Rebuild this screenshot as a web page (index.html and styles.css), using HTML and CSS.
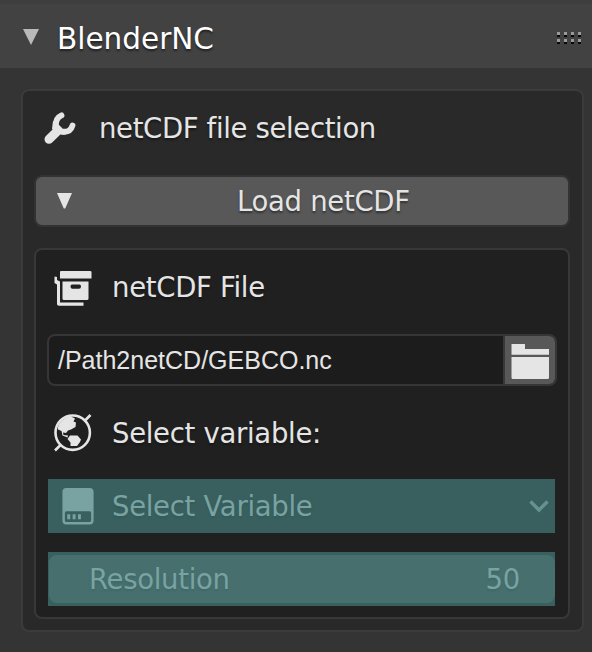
FILE: index.html
```html
<!DOCTYPE html>
<html lang="en">
<head>
<meta charset="utf-8">
<title>BlenderNC</title>
<link rel="stylesheet" href="styles.css">
</head>
<body>
<header class="header">
  <svg class="header-arrow" viewBox="0 0 16 16"><path d="M0 0H16L8 16Z"/></svg>
  <h1 class="title">BlenderNC</h1>
  <div class="grip"><i></i><i></i><i></i><i></i><i></i><i></i><i></i><i></i></div>
</header>
<main class="panel">
  <div class="row heading">
    <svg class="wrench" viewBox="0 0 32 32"><path d="M5 27.300L13 19.500" stroke-width="9"/><path d="M17.500 3.300C12.500 5.500 11.500 9 12 14L17.500 19.500C23 20.500 27 18.500 28.500 13.500" stroke-width="5.800"/><path class="solid" d="M9 9L13.500 12Q15 17.500 21 18L23 22Q18 23.500 16 22L8 17Z"/></svg>
    <span class="label selection">netCDF file selection</span>
  </div>
  <button class="load"><svg class="load-arrow" viewBox="0 0 15 16"><path d="M0 0H15L8.200 15.500H6.800Z"/></svg><span class="label load-label">Load netCDF</span></button>
  <section class="inner">
    <div class="row file-row">
      <svg class="archive" viewBox="0 0 38 36"><path d="M6 1Q6 0 7 0H36Q37.500 0 37.500 1V7.500H6ZM8.500 10.500H34.500V27.500Q34.500 29 33 29H10Q8.500 29 8.500 27.500ZM18 13.500Q16.500 13.500 16.500 15.500T18 17.800H25Q27 17.800 27 15.500T25 13.500Z" fill-rule="evenodd"/><path d="M.5 5.500L3 6V9L6 10.500V31.500H29.500V34.800H5Q3 34.800 3 33V13.500L.5 12Z"/></svg>
      <span class="label file">netCDF File</span>
    </div>
    <div class="path"><span class="path-text">/Path2netCD/GEBCO.nc</span><span class="browse"><svg class="folder" viewBox="0 0 38 35"><path d="M.5 0H14V5H38V10.800H.5ZM.5 13H38V33.500Q38 35 36.500 35H2Q.5 35 .5 33.500Z"/></svg></span></div>
    <div class="row variable-row">
      <svg class="globe" viewBox="0 0 38 38"><circle cx="18.700" cy="18.700" r="17.200"/><path class="axis" d="M1 36.500L7 30.500M30.500 7L36.500 1"/><path class="land" d="M4 13C6 7 11 3 17 2.500L21 4.500L19.500 7.500L22 8.500L21.500 13L17 15.500L14 16.500L12 19L9 18.500L9.500 21L14 21.500L13.500 23.500L8.500 21.500L7.500 17L4 15.500ZM16 21.500L23.500 21.500L27 25.500L26 28L23 32L16.500 32L16.500 28.500L13.500 25Z"/></svg>
      <span class="label variable">Select variable:</span>
    </div>
    <div class="dropdown">
      <svg class="drive" viewBox="0 0 32 38"><path fill-rule="evenodd" d="M4 0H28Q32 0 32 4V33Q32 37.500 28 37.500H4Q0 37.500 0 33V4Q0 0 4 0ZM4 24Q2.500 24 2.500 26V33Q2.500 35 4 35H28Q29.500 35 29.500 33V26Q29.500 24 28 24ZM5 27H8V32H5ZM10.500 27H13.500V32H10.500ZM16 27H19V32H16Z"/></svg>
      <span class="label select">Select Variable</span>
      <svg class="chevron" viewBox="0 0 20 13"><path d="M1.500 1.500L10 10L18.500 1.500"/></svg>
    </div>
    <div class="resolution"><div class="field"><span class="label">Resolution</span><span class="label">50</span></div></div>
  </section>
</main>
</body>
</html>
```
FILE: styles.css
```css
* { box-sizing: border-box; }
body { margin: 0; width: 592px; height: 652px; background: #343434; overflow: hidden; font-family: "DejaVu Sans", sans-serif; color: #e5e5e5; }
svg { display: block; flex: none; fill: #e5e5e5; overflow: visible; }
.header { height: 68px; background: #424242; border-top: 4px solid #3e3e3e; display: flex; align-items: center; padding: 4px 11px 0 23px; }
.header-arrow { width: 16px; height: 16px; fill: #b9b9b9; margin: -2px 18px 0 0; }
.title { margin: 1px 0 0; font-size: 29.5px; font-weight: 400; color: #fff; text-shadow: 0 2px 2px #222; letter-spacing: 0; line-height: 34px; }
.grip { margin-left: auto; display: grid; grid-template-columns: repeat(4, 3px); gap: 2px 4px; }
.grip i { width: 3px; height: 5px; background: #999; border-bottom: 2px solid #080808; }
.panel { width: 563px; height: 543px; margin: 21px 0 0 21px; background: #292929; border: 2px solid #3b3b3b; border-radius: 8px; padding: 0 12px; }
.row { display: flex; align-items: center; }
.label { font-size: 27.5px; line-height: 34px; letter-spacing: -.3px; white-space: pre; text-shadow: 0 2px 2px #181818; }
.heading { height: 74px; padding-left: 9px; }
.wrench { width: 32px; height: 32px; }
.wrench path { fill: none; stroke: #e5e5e5; stroke-linecap: round; }
.wrench .solid { fill: #e5e5e5; stroke: none; }
.selection { margin-left: 23px; letter-spacing: -.35px; }
.load { display: flex; align-items: center; width: 536px; height: 52px; margin: 10px 0 0 -1px; padding: 0 0 0 21px; background: #585858; border: 2px solid #333; border-radius: 8px; font: inherit; color: inherit; }
.load-arrow { width: 15px; height: 16px; }
.load-label { margin-left: 165px; text-shadow: 0 2px 2px #333; }
.inner { width: 536px; height: 371px; margin: 21px 0 0 -1px; padding: 0 11px; border: 2px solid #383838; border-radius: 8px; background: #202020; }
.file-row { height: 76px; padding-left: 7px; }
.archive { width: 38px; height: 36px; margin-top: 2px; }
.file { margin: -2px 0 0 20px; }
.path { width: 510px; height: 52px; margin-top: 8px; border: 2px solid #363636; border-radius: 8px; background: #1c1c1c; display: flex; overflow: hidden; }
.path-text { flex: 1; padding-left: 9px; font: 25px/49px "Liberation Sans", sans-serif; white-space: pre; }
.browse { width: 52px; border-left: 2px solid #383838; background: #585858; padding: 8px 0 0 6px; }
.folder { width: 38px; height: 35px; }
.variable-row { height: 93px; padding-left: 7px; }
.globe { width: 38px; height: 38px; margin-top: 1px; }
.globe circle, .globe .axis { fill: none; stroke: #e5e5e5; stroke-width: 2.6; }
.variable { margin-left: 20px; }
.dropdown, .resolution { width: 507px; height: 54px; margin-left: 1px; background: #39605f; color: #78a3a2; }
.dropdown { display: flex; align-items: center; padding: 0 6px 0 14px; }
.dropdown .label, .resolution .label { text-shadow: 0 2px 2px #345a59; }
.drive { width: 32px; height: 37px; fill: #78a3a2; }
.select { margin-left: 18px; }
.chevron { width: 20px; height: 13px; margin-left: auto; }
.chevron path { fill: none; stroke: #659290; stroke-width: 3.5; }
.resolution { margin-top: 19px; padding: 3px 0 3px 1px; }
.field { height: 48px; border-radius: 8px; background: #476f6e; display: flex; align-items: center; justify-content: space-between; padding: 0 35px 0 40px; }
.field .label { text-shadow: 0 2px 2px #406867; }
```
